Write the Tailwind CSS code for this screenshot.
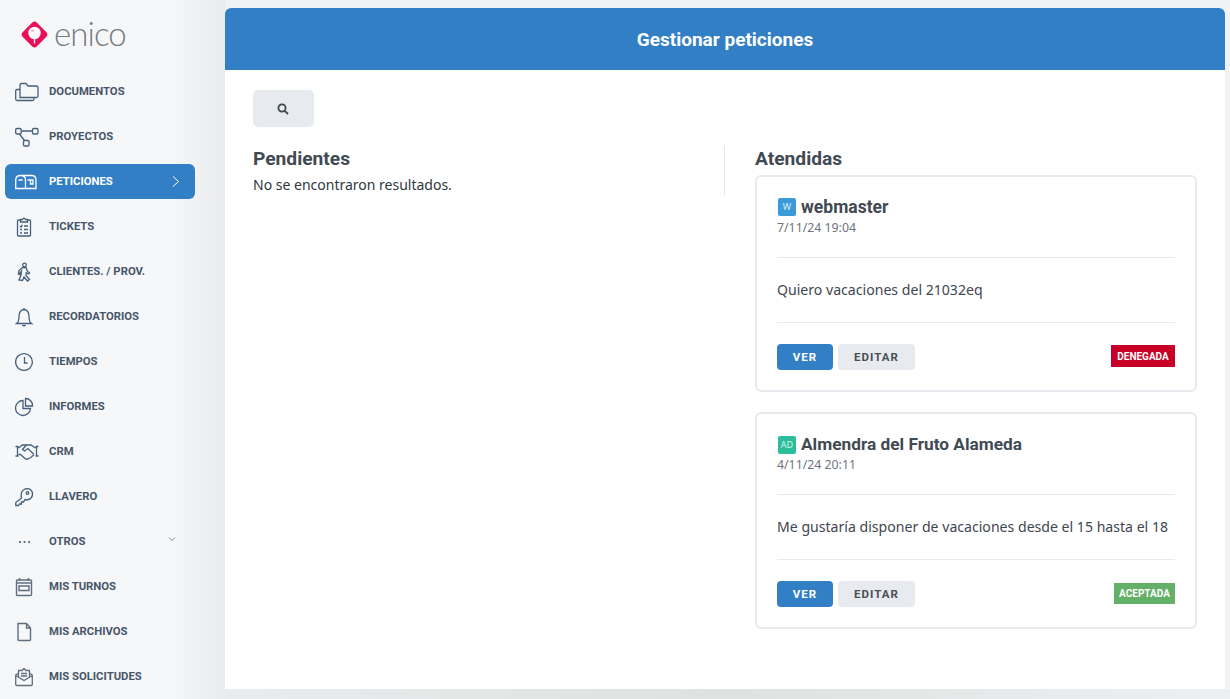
<!DOCTYPE html>
<html lang="en">
  <head>
    <meta charset="UTF-8" />
    <meta name="viewport" content="width=device-width, initial-scale=1.0" />
    <title>Gestionar peticiones</title>
    <script src="https://cdn.jsdelivr.net/npm/@tailwindcss/browser@4"></script>
  </head>
  <body class="h-[699px] w-[1230px] overflow-hidden bg-[#f1f2f4] font-['Noto_Sans',sans-serif] text-[#3e4650]">
    <div class="flex h-full">
      <!-- sidebar -->
      <aside class="w-[225px] shrink-0 bg-linear-to-r from-[#f6f7f9] from-75% to-[#e9ebed]">
        <div class="flex h-[69px] items-center pl-[21px]">
          <svg class="h-[27px] w-[27px]" viewBox="0 0 27 27">
            <rect x="3.5" y="3.5" width="20" height="20" rx="3.5" transform="rotate(45 13.5 13.5)" fill="#ea0f55" />
            <circle cx="13.5" cy="12" r="6.2" fill="#fff" />
            <path d="M13.5 18 V22.5" stroke="#fff" stroke-width="1.3" />
            <circle cx="11.5" cy="9.5" r="1.6" fill="#f9bccd" />
          </svg>
          <span class="ml-[6px] mb-[2px] text-[33px] leading-none font-['Lato',sans-serif] font-light tracking-[-0.9px] text-[#777b80]">enico</span>
        </div>
        <nav class="flex flex-col font-['Roboto',sans-serif] text-[11.3px] font-bold uppercase text-[#46566a]">
          <a class="flex h-[45px] items-center pl-[15px]">
            <svg class="h-6 w-6" viewBox="0 0 24 24" fill="none" stroke="#44607c" stroke-width="1.3"><path d="M0.7 19 V11 Q0.7 9.5 2 9.5 H5 M0.7 19 Q0.7 20.5 2 20.5 H17.5 Q19 20.5 19 19 V17.5 M5 17.5 H21.5 Q23 17.5 23 16 V7.5 Q23 6 21.5 6 H13 L11 3.5 H6.5 Q5 3.5 5 5 Z" /></svg>
            <span class="ml-[10px] pt-[2px]">Documentos</span>
          </a>
          <a class="flex h-[45px] items-center pl-[15px]">
            <svg class="h-6 w-6" viewBox="0 0 24 24" fill="none" stroke="#44607c" stroke-width="1.3"><rect x="0.7" y="3.5" width="5.5" height="5.5" rx="1.2" /><rect x="17.5" y="3.5" width="5.5" height="5.5" rx="1.2" /><rect x="8.5" y="15.5" width="5.5" height="5.5" rx="1.2" /><path d="M6 6 H17.5 M4.5 9 L9.5 15.5" /></svg>
            <span class="ml-[10px] pt-[2px]">Proyectos</span>
          </a>
          <a class="ml-[5px] my-[5px] flex h-[35px] w-[190px] items-center rounded-[6px] bg-[#337fc6] pl-[10px] text-white">
            <svg class="h-6 w-6" viewBox="0 0 24 24" fill="none" stroke="#fff" stroke-width="1.3"><path d="M0.7 18.5 V10 Q0.7 5.5 5.5 5.5 H16.5 Q21 5.5 21 10 V18.5 Z M10.5 18.5 V10 Q10.5 5.5 5.5 5.5 M3.5 10 H7.5 M12.5 10 H18 V14 H15.5 V10" /></svg>
            <span class="ml-[10px] pt-[2px]">Peticiones</span>
            <svg class="ml-auto mr-[15px] h-[11px] w-[8px]" viewBox="0 0 8 11" fill="none" stroke="#fff" stroke-width="1"><path d="M1 0.5 L6.5 5.5 L1 10.5" /></svg>
          </a>
          <a class="flex h-[45px] items-center pl-[15px]">
            <svg class="h-6 w-6" viewBox="0 0 24 24" fill="none" stroke="#44607c" stroke-width="1.3"><path d="M5.5 5 H3.5 Q2.5 5 2.5 6 V20 Q2.5 21 3.5 21 H14.5 Q15.5 21 15.5 20 V6 Q15.5 5 14.5 5 H12.5 M5.5 4.5 H7.5 Q9 2 10.5 4.5 H12.5 V7 H5.5 Z M5 11 L6 12 L7.5 10 M9 11 H13 M5 14.5 H7 M9 14.5 H13 M5 18 H7 M9 18 H13" /></svg>
            <span class="ml-[10px] pt-[2px]">Tickets</span>
          </a>
          <a class="flex h-[45px] items-center pl-[15px]">
            <svg class="h-6 w-6" viewBox="0 0 24 24" fill="none" stroke="#44607c" stroke-width="1.3"><circle cx="9.5" cy="5" r="1.8" /><path d="M7.5 7.5 H11 L12.5 11.5 L14.5 12.5 L13.8 14 L11.2 12.8 L11 15.5 L14.5 19.5 L12.5 21 L9 17 L7.5 20.5 L4 20 L6 15 L6.5 11 L5.3 12.5 L4.8 14.5 L3.3 14 L4 10.5 Z" /></svg>
            <span class="ml-[10px] pt-[2px]">Clientes. / Prov.</span>
          </a>
          <a class="flex h-[45px] items-center pl-[15px]">
            <svg class="h-6 w-6" viewBox="0 0 24 24" fill="none" stroke="#44607c" stroke-width="1.3"><path d="M1.5 18.5 Q4 17 4 11.5 Q4 5 9 4.5 Q14 5 14 11.5 Q14 17 16.5 18.5 Z M9 4.5 V3 M7.5 20 Q9 21.5 10.5 20" /></svg>
            <span class="ml-[10px] pt-[2px]">Recordatorios</span>
          </a>
          <a class="flex h-[45px] items-center pl-[15px]">
            <svg class="h-6 w-6" viewBox="0 0 24 24" fill="none" stroke="#44607c" stroke-width="1.3"><circle cx="9" cy="12" r="8.4" /><path d="M9.5 7 V13 H12.5" /></svg>
            <span class="ml-[10px] pt-[2px]">Tiempos</span>
          </a>
          <a class="flex h-[45px] items-center pl-[15px]">
            <svg class="h-6 w-6" viewBox="0 0 24 24" fill="none" stroke="#44607c" stroke-width="1.3"><path d="M8 5.5 A7.5 7.5 0 1 0 15.5 13.5 H8 Z M10.5 3.5 V11 H17.5 A7 7 0 0 0 10.5 3.5 Z" /></svg>
            <span class="ml-[10px] pt-[2px]">Informes</span>
          </a>
          <a class="flex h-[45px] items-center pl-[15px]">
            <svg class="h-6 w-6" viewBox="0 0 24 24" fill="none" stroke="#44607c" stroke-width="1.3"><path d="M0.5 6.5 H3.5 M0.5 16 H3.5 M2.5 6.5 V16 M20.5 6.5 H23.5 M20.5 16 H23.5 M21.5 6.5 V16 M3.5 8 L7.5 5 H11 L16 5 L20.5 8 M11 5.5 L7.5 9.5 L9.5 11 L13 8.5 L19 14.5 M3.5 14.5 L5.5 14.5 L10 18.5 Q12 20 13.5 18.5 L16 17.5 L19 14.5" /></svg>
            <span class="ml-[10px] pt-[2px]">CRM</span>
          </a>
          <a class="flex h-[45px] items-center pl-[15px]">
            <svg class="h-6 w-6" viewBox="0 0 24 24" fill="none" stroke="#44607c" stroke-width="1.3"><path d="M6.5 13 Q5 6 10 4 Q16 2.5 17.5 8 Q18 14 12 15 L10 14.5 L8.5 17 H6.5 V19 H4.5 L3.5 20.5 H0.8 V17.5 Z" /><circle cx="12.5" cy="8" r="1.3" /></svg>
            <span class="ml-[10px] pt-[2px]">Llavero</span>
          </a>
          <a class="flex h-[45px] items-center pl-[15px]">
            <svg class="h-6 w-6" viewBox="0 0 24 24" fill="#44607c"><circle cx="5" cy="12" r="1.1" /><circle cx="9.5" cy="12" r="1.1" /><circle cx="14" cy="12" r="1.1" /></svg>
            <span class="ml-[10px] pt-[2px]">Otros</span>
            <svg class="ml-auto mr-[49px] mb-[5px] h-2 w-2" viewBox="0 0 8 8" fill="none" stroke="#6b7785" stroke-width="0.9"><path d="M1 2.5 L4 5.5 L7 2.5" /></svg>
          </a>
          <a class="flex h-[45px] items-center pl-[15px]">
            <svg class="h-6 w-6" viewBox="0 0 24 24" fill="none" stroke="#5f6f80" stroke-width="1.4"><rect x="1.5" y="5" width="15" height="15.5" rx="1" /><path d="M4.5 3 V6 M13.5 3 V6 M1.5 8 H16.5 M4 11 H14 V15.5 H4 Z" /></svg>
            <span class="ml-[10px] pt-[2px]">Mis turnos</span>
          </a>
          <a class="flex h-[45px] items-center pl-[15px]">
            <svg class="h-6 w-6" viewBox="0 0 24 24" fill="none" stroke="#5f6f80" stroke-width="1.4"><path d="M3 3.5 H11.5 L15.5 8 V19.5 Q15.5 20.5 14.5 20.5 H4 Q3 20.5 3 19.5 Z M11.5 3.5 V8 H15.5" /></svg>
            <span class="ml-[10px] pt-[2px]">Mis archivos</span>
          </a>
          <a class="flex h-[45px] items-center pl-[15px]">
            <svg class="h-6 w-6" viewBox="0 0 24 24" fill="none" stroke="#5f6f80" stroke-width="1.3"><path d="M0.7 10 L3.5 8 V5.5 H7 L9 3.5 L11 5.5 H14.5 V8 L17.3 10 V19.5 Q17.3 20.5 16.3 20.5 H1.7 Q0.7 20.5 0.7 19.5 Z M3.5 8 V12.5 M14.5 8 V12.5 M0.8 10.5 L9 15.5 L17.2 10.5 M6 8.5 H12 M6 11 H12" /></svg>
            <span class="ml-[10px] pt-[2px]">Mis solicitudes</span>
          </a>
        </nav>
      </aside>

      <!-- main -->
      <div class="flex w-[1005px] flex-col pt-[8px]">
        <main class="h-[681px] w-[1000px] rounded-t-[6px] bg-white">
          <h1 class="flex h-[62px] items-center justify-center rounded-t-[6px] bg-[#337fc6] pt-[2px] font-['Roboto',sans-serif] text-[19px] font-bold text-white">Gestionar peticiones</h1>
          <div class="px-[28px] pt-[20px]">
            <button class="flex h-[37px] w-[61px] items-center justify-center rounded-[5px] bg-[#e7eaee]">
              <svg class="mr-[1px] h-3 w-3" viewBox="0 0 12 12" fill="none" stroke="#3e4650" stroke-width="1.8"><circle cx="5" cy="5" r="3.6" /><path d="M7.8 7.8 L11 11" /></svg>
            </button>
            <div class="mt-[19px] flex">
              <section class="h-[50px] w-[472px] border-r border-[#e3e6ea]">
                <h2 class="mt-[2px] font-['Roboto',sans-serif] text-[19.2px] leading-[21px] font-bold text-[#414a53]">Pendientes</h2>
                <p class="mt-[6px] text-[14px] leading-[20px] text-[#2f3740]">No se encontraron resultados.</p>
              </section>
              <section class="ml-[30px] w-[442px]">
                <h2 class="mt-[2px] font-['Roboto',sans-serif] text-[19.2px] leading-[21px] font-bold text-[#414a53]">Atendidas</h2>
                <article class="mt-[6px] h-[217px] rounded-[6px] border-2 border-[#e6eaef] px-[20px] pt-[20px]">
                  <div class="flex h-[20px] items-center">
                    <span class="ml-px flex h-[18px] w-[18px] items-center justify-center rounded-[2px] bg-[#3c9ad9] text-[9px] text-[#d8ecf9]">W</span>
                    <span class="ml-[5px] font-['Roboto',sans-serif] text-[17.5px] font-bold text-[#414a53]">webmaster</span>
                  </div>
                  <div class="mt-[2px] text-[12.3px] leading-[18px] text-[#6d747c]">7/11/24 19:04</div>
                  <div class="mt-[20px] flex h-[66px] items-center border-y border-[#e6e9ed] pb-[1px] text-[14.1px] text-[#3e4650]">Quiero vacaciones del 21032eq</div>
                  <div class="mt-[21px] flex items-start font-['Roboto',sans-serif]">
                    <button class="h-[26px] w-[56px] rounded-[4px] bg-[#337fc6] pt-px text-[11.5px] font-bold tracking-[1px] text-white">VER</button>
                    <button class="ml-[5px] h-[26px] w-[77px] rounded-[4px] bg-[#e7eaee] pt-px text-[11.5px] font-bold tracking-[1px] text-[#4a4f55]">EDITAR</button>
                    <span class="ml-auto mt-px flex h-[22px] w-[64px] items-center justify-center bg-[#c60026] text-[10px] font-bold text-white">DENEGADA</span>
                  </div>
                </article>
                <article class="mt-[20px] h-[217px] rounded-[6px] border-2 border-[#e6eaef] px-[20px] pt-[20px]">
                  <div class="flex h-[20px] items-center">
                    <span class="ml-px mt-[2px] flex h-[18px] w-[18px] items-center justify-center rounded-[2px] bg-[#2dbd9b] text-[9px] text-[#d9f4ed]">AD</span>
                    <span class="ml-[5px] mt-[2px] font-['Roboto',sans-serif] text-[17.3px] font-bold text-[#414a53]">Almendra del Fruto Alameda</span>
                  </div>
                  <div class="mt-[2px] text-[12.3px] leading-[18px] text-[#6d747c]">4/11/24 20:11</div>
                  <div class="mt-[20px] flex h-[66px] items-center border-y border-[#e6e9ed] text-[14.1px] text-[#3e4650]">Me gustaría disponer de vacaciones desde el 15 hasta el 18</div>
                  <div class="mt-[21px] flex items-start font-['Roboto',sans-serif]">
                    <button class="h-[26px] w-[56px] rounded-[4px] bg-[#337fc6] pt-px text-[11.5px] font-bold tracking-[1px] text-white">VER</button>
                    <button class="ml-[5px] h-[26px] w-[77px] rounded-[4px] bg-[#e7eaee] pt-px text-[11.5px] font-bold tracking-[1px] text-[#4a4f55]">EDITAR</button>
                    <span class="ml-auto mt-[2px] flex h-[21px] w-[61px] items-center justify-center bg-[#63b168] text-[10px] font-bold text-white">ACEPTADA</span>
                  </div>
                </article>
              </section>
            </div>
          </div>
        </main>
        <div class="h-[10px] bg-linear-to-r from-[#e9ebed] via-[#e0e2e1] to-[#eeeff2]"></div>
      </div>
    </div>
  </body>
</html>
